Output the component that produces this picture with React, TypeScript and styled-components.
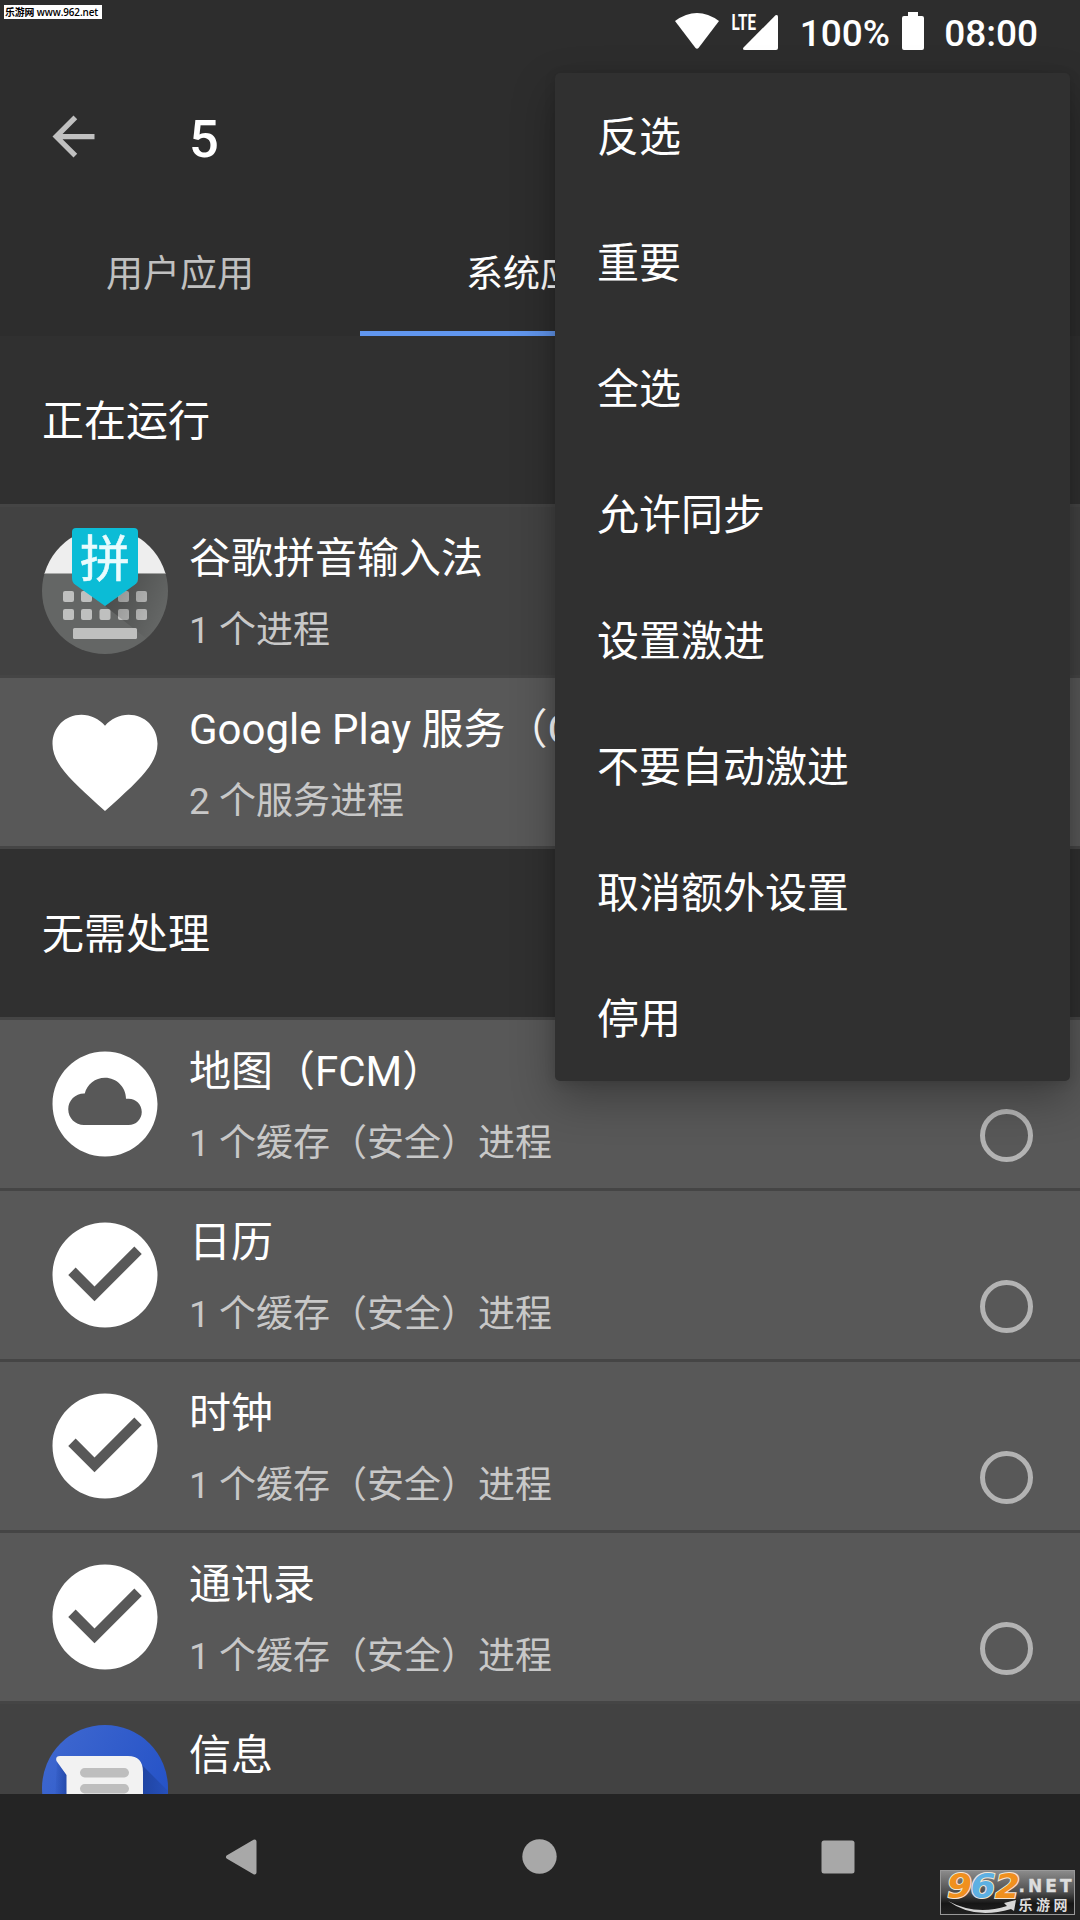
import React from "react";
import styled, { createGlobalStyle } from "styled-components";

const Global = createGlobalStyle`
  * { box-sizing: border-box; }
  body { margin: 0; background: #242424; }
`;

const Screen = styled.div`
  position: relative;
  display: flex;
  flex-direction: column;
  width: 1080px;
  height: 1920px;
  overflow: hidden;
  background: #303030;
  color: #fff;
  font-family: Roboto, "Noto Sans CJK SC", sans-serif;
`;

const StatusBar = styled.header`
  flex: none;
  display: flex;
  justify-content: flex-end;
  align-items: flex-start;
  height: 63px;
  padding-right: 42px;
  background: #2d2d2d;
`;

const StatusIcons = styled.svg`
  flex: none;
  width: 130px;
  height: 63px;
`;

const StatusText = styled.span<{ $width: number }>`
  width: ${(p) => p.$width}px;
  font-size: 37px;
  font-weight: 500;
  line-height: 43px;
  padding-top: 12px;
  text-align: right;
  white-space: nowrap;
`;

const Battery = styled.svg`
  flex: none;
  width: 22px;
  height: 63px;
  margin-left: 12px;
`;

const Toolbar = styled.div`
  flex: none;
  display: flex;
  align-items: center;
  height: 147px;
  padding-left: 42px;
  background: #2d2d2d;
`;

const BackIcon = styled.svg`
  width: 63px;
  height: 63px;
`;

const Count = styled.h1`
  margin: 4px 0 0 84px;
  font-size: 52.5px;
  font-weight: 500;
  line-height: 62px;
`;

const Tabs = styled.nav`
  flex: none;
  display: flex;
  height: 126px;
  background: #2d2d2d;
`;

const Tab = styled.div<{ $active?: boolean }>`
  display: flex;
  align-items: center;
  justify-content: center;
  width: 360px;
  border-bottom: 5px solid ${(p) => (p.$active ? "#6196ee" : "transparent")};
  color: ${(p) => (p.$active ? "#fff" : "#c0c0c0")};
  font-size: 37px;
`;

const List = styled.main`
  flex: 1;
  min-height: 0;
  display: flex;
  flex-direction: column;
  gap: 3px;
  overflow: hidden;
  background: #454545;
`;

const Section = styled.h2`
  flex: none;
  display: flex;
  align-items: center;
  height: 168px;
  margin: 0;
  padding: 0 0 6px 42px;
  background: #303030;
  font-size: 42px;
  font-weight: 400;
`;

const Row = styled.div<{ $dim?: boolean }>`
  flex: none;
  display: flex;
  height: 168px;
  padding: 21px 47px 0 42px;
  background: ${(p) => (p.$dim ? "#424242" : "#585858")};
`;

const AppIcon = styled.svg`
  flex: none;
  width: 126px;
  height: 126px;
`;

const Labels = styled.div`
  flex: 1;
  min-width: 0;
  padding-left: 21px;
  white-space: nowrap;
`;

const Name = styled.div`
  height: 66px;
  line-height: 62px;
  font-size: 42px;
`;

const Detail = styled.div`
  height: 66px;
  line-height: 73px;
  font-size: 37px;
  color: #c8c8c8;
`;

const Radio = styled.span`
  flex: none;
  width: 53px;
  height: 53px;
  margin-top: 68px;
  border: 5.25px solid #b3b3b3;
  border-radius: 50%;
`;

const Menu = styled.div`
  position: absolute;
  left: 555px;
  top: 73px;
  width: 515px;
  height: 1008px;
  border-radius: 5px;
  background: #303030;
  box-shadow: 0 18px 44px rgba(0, 0, 0, 0.3), 0 2px 12px rgba(0, 0, 0, 0.12);
`;

const MenuItem = styled.div`
  display: flex;
  align-items: center;
  height: 126px;
  padding: 0 0 5px 42px;
  font-size: 42px;
`;

const NavBar = styled.footer`
  flex: none;
  display: flex;
  justify-content: center;
  height: 126px;
  background: #242424;
`;

const NavIcons = styled.svg`
  width: 1080px;
  height: 126px;
`;

const SiteTag = styled.div`
  position: absolute;
  left: 4px;
  top: 5px;
  width: 98px;
  height: 14px;
  padding-left: 1px;
  background: #fff;
  color: #000;
  font: 600 10px/14px "Open Sans", "Noto Sans CJK SC", sans-serif;
  font-size: 9.9px;
  letter-spacing: -0.1px;
  white-space: nowrap;
`;

const Badge = styled.svg`
  position: absolute;
  left: 940px;
  top: 1870px;
  width: 135px;
  height: 45px;
  overflow: visible;
`;

const HEART =
  "M12 21.35l-1.45-1.32C5.4 15.36 2 12.28 2 8.5 2 5.42 4.42 3 7.5 3c1.74 0 3.41.81 4.5 2.09C13.09 3.81 14.76 3 16.5 3 19.58 3 22 5.42 22 8.5c0 3.78-3.4 6.86-8.55 11.54L12 21.35z";
const DISC = "M12 2C6.48 2 2 6.48 2 12s4.48 10 10 10 10-4.48 10-10S17.52 2 12 2z";
const CLOUD =
  DISC +
  "m4.5 14H8c-1.66 0-3-1.34-3-3s1.34-3 3-3l.14.01C8.58 8.28 10.13 7 12 7c2.21 0 4 1.79 4 4h.5c1.38 0 2.5 1.12 2.5 2.5S17.88 16 16.5 16z";
const CHECK = DISC + "m-2 15l-5-5 1.41-1.41L10 14.17l7.59-7.59L19 8l-9 9z";

function GlyphIcon({ d }: { d: string }) {
  return (
    <AppIcon viewBox="0 0 24 24">
      <path d={d} fill="#fff" fillRule="evenodd" />
    </AppIcon>
  );
}

function PinyinIcon() {
  return (
    <AppIcon viewBox="0 0 126 126">
      <defs>
        <clipPath id="disc"><circle cx="63" cy="63" r="63" /></clipPath>
        <linearGradient id="cast" x1="0" y1="0" x2="1" y2=".6">
          <stop offset="0" stopColor="#000" stopOpacity=".3" />
          <stop offset=".9" stopColor="#000" stopOpacity="0" />
        </linearGradient>
      </defs>
      <g clipPath="url(#disc)">
        <rect width="126" height="46" fill="#eee" />
        <rect y="45.500" width="126" height="81" fill="#646665" />
        {[63, 81].map((y) =>
          [21, 39, 57.5, 76, 94].map((x) => (
            <rect key={x + "-" + y} x={x} y={y} width="11" height="11" rx="2" fill="#bfc0bf" />
          ))
        )}
        <path d="M96 45.500H126V126H124L63 78L96 54z" fill="url(#cast)" />
        <rect x="31" y="100" width="64" height="11" rx="1.500" fill="#bfc0bf" />
      </g>
      <path d="M34 0H92Q96 0 96 4V50Q96 54 93 56.500L63 78L33 56.500Q30 54 30 50V4Q30 0 34 0z" fill="#0bbcd6" />
      <text x="63" y="49" fontSize="50" textAnchor="middle" fill="#e9fbfd" stroke="#e9fbfd" strokeWidth=".6">拼</text>
    </AppIcon>
  );
}

function MessagesIcon() {
  return (
    <AppIcon viewBox="0 0 126 126">
      <defs>
        <linearGradient id="blue" x1="0" y1="0" x2="1" y2=".5">
          <stop offset="0" stopColor="#4069d0" />
          <stop offset="1" stopColor="#2653c7" />
        </linearGradient>
        <linearGradient id="shade" x1="0" y1="0" x2="1" y2="0">
          <stop offset="0" stopColor="#1f439f" />
          <stop offset="1" stopColor="#2650bb" />
        </linearGradient>
        <linearGradient id="edge" x1="0" y1="0" x2="1" y2="0">
          <stop offset="0" stopColor="#1c3f9c" stopOpacity="0" />
          <stop offset="1" stopColor="#1c3f9c" stopOpacity=".7" />
        </linearGradient>
        <clipPath id="disc2"><circle cx="63" cy="63" r="63" /></clipPath>
      </defs>
      <circle cx="63" cy="63" r="63" fill="url(#blue)" />
      <g clipPath="url(#disc2)">
        <path d="M96 36L126 66V126H96z" fill="url(#shade)" />
        <path d="M15 37L25 50V90H12z" fill="url(#edge)" />
      </g>
      <path d="M18 31H86Q101 31 101 47V100H24.500V50L14.500 36Q13 31 18 31z" fill="#f2f2f2" />
      <rect x="38" y="43" width="49" height="9.500" rx="4.700" fill="#bebebe" />
      <rect x="38" y="59" width="49" height="9.500" rx="4.700" fill="#bebebe" />
    </AppIcon>
  );
}

type App = { name: string; detail: string; icon: React.ReactNode; dim?: boolean; radio?: boolean };

const running: App[] = [
  { name: "谷歌拼音输入法", detail: "1 个进程", icon: <PinyinIcon />, dim: true },
  { name: "Google Play 服务（GCM）", detail: "2 个服务进程", icon: <GlyphIcon d={HEART} /> },
];

const cached = "1 个缓存（安全）进程";
const idle: App[] = [
  { name: "地图（FCM）", detail: cached, icon: <GlyphIcon d={CLOUD} />, radio: true },
  { name: "日历", detail: cached, icon: <GlyphIcon d={CHECK} />, radio: true },
  { name: "时钟", detail: cached, icon: <GlyphIcon d={CHECK} />, radio: true },
  { name: "通讯录", detail: cached, icon: <GlyphIcon d={CHECK} />, radio: true },
  { name: "信息", detail: "", icon: <MessagesIcon />, dim: true },
];

const menu = ["反选", "重要", "全选", "允许同步", "设置激进", "不要自动激进", "取消额外设置", "停用"];

function AppRow({ app }: { app: App }) {
  return (
    <Row $dim={app.dim}>
      {app.icon}
      <Labels>
        <Name>{app.name}</Name>
        <Detail>{app.detail}</Detail>
      </Labels>
      {app.radio && <Radio />}
    </Row>
  );
}

export default function App() {
  return (
    <Screen>
      <Global />
      <StatusBar>
        <StatusIcons viewBox="661 0 130 63">
          <path d="M675 21Q697 5 719 21L698.500 48Q697 49.500 695.500 48z" fill="#fff" />
          <text x="731.500" y="30" fontSize="22" fontWeight="700" textLength="24.500" lengthAdjust="spacingAndGlyphs" fill="#fff">LTE</text>
          <path d="M775.500 15.300Q778 14 778 17V48Q778 50 776 50H745Q742 50 743.500 47.500z" fill="#fff" />
        </StatusIcons>
        <StatusText $width={99}>100%</StatusText>
        <Battery viewBox="0 0 22 63">
          <path d="M6 12H16V16H20Q22 16 22 18V48Q22 50 20 50H2Q0 50 0 48V18Q0 16 2 16H6z" fill="#fff" />
        </Battery>
        <StatusText $width={114}>08:00</StatusText>
      </StatusBar>
      <Toolbar>
        <BackIcon viewBox="0 0 24 24">
          <path d="M20 11H7.830l5.590-5.590L12 4l-8 8 8 8 1.410-1.410L7.830 13H20v-2z" fill="#c0c0c0" />
        </BackIcon>
        <Count>5</Count>
      </Toolbar>
      <Tabs>
        <Tab>用户应用</Tab>
        <Tab $active>系统应用</Tab>
      </Tabs>
      <List>
        <Section>正在运行</Section>
        {running.map((app) => <AppRow key={app.name} app={app} />)}
        <Section>无需处理</Section>
        {idle.map((app) => <AppRow key={app.name} app={app} />)}
      </List>
      <NavBar>
        <NavIcons viewBox="0 0 1080 126">
          <path d="M228 63L254.500 47.500V78.500z" fill="#a8a8a8" stroke="#a8a8a8" strokeWidth="4" strokeLinejoin="round" />
          <circle cx="539.500" cy="62.500" r="17.200" fill="#a8a8a8" />
          <rect x="821.500" y="46.500" width="33" height="33" rx="2.500" fill="#a8a8a8" />
        </NavIcons>
      </NavBar>
      <Menu>
        {menu.map((label) => <MenuItem key={label}>{label}</MenuItem>)}
      </Menu>
      <SiteTag>乐游网 www.962.net</SiteTag>
      <Badge viewBox="0 0 135 45">
        <defs>
          <linearGradient id="plate" x1="0" y1="0" x2="0" y2="1">
            <stop offset="0" stopColor="#8c8c8c" />
            <stop offset=".5" stopColor="#4c4c4c" />
            <stop offset=".75" stopColor="#161616" />
            <stop offset="1" stopColor="#222" />
          </linearGradient>
        </defs>
        <rect x=".5" y=".5" width="134" height="44" fill="url(#plate)" stroke="#999" />
        <g fontFamily="DejaVu Sans" fontSize="33" fontWeight="700" fontStyle="italic" stroke="#f3e6d6" strokeWidth="2" paintOrder="stroke" fill="#f0901e">
          <text x="7" y="28" textLength="25" lengthAdjust="spacingAndGlyphs">9</text>
          <text x="30.500" y="28" textLength="25" lengthAdjust="spacingAndGlyphs" fill="#5db0e2">6</text>
          <text x="55" y="28" textLength="25" lengthAdjust="spacingAndGlyphs">2</text>
        </g>
        <path d="M8 31Q36 46 67 36L64 33L76 30L74 41L71 39Q34 50 8 31z" fill="#d6d6d6" />
        <text x="78.500" y="21.500" fontFamily="DejaVu Sans" fontSize="17" fontWeight="700" textLength="53" lengthAdjust="spacing" fill="#ddd" stroke="#ddd" strokeWidth=".4">.NET</text>
        <text x="78.500" y="39.500" fontSize="14" fontWeight="700" textLength="49" fill="#ddd">乐游网</text>
      </Badge>
    </Screen>
  );
}
